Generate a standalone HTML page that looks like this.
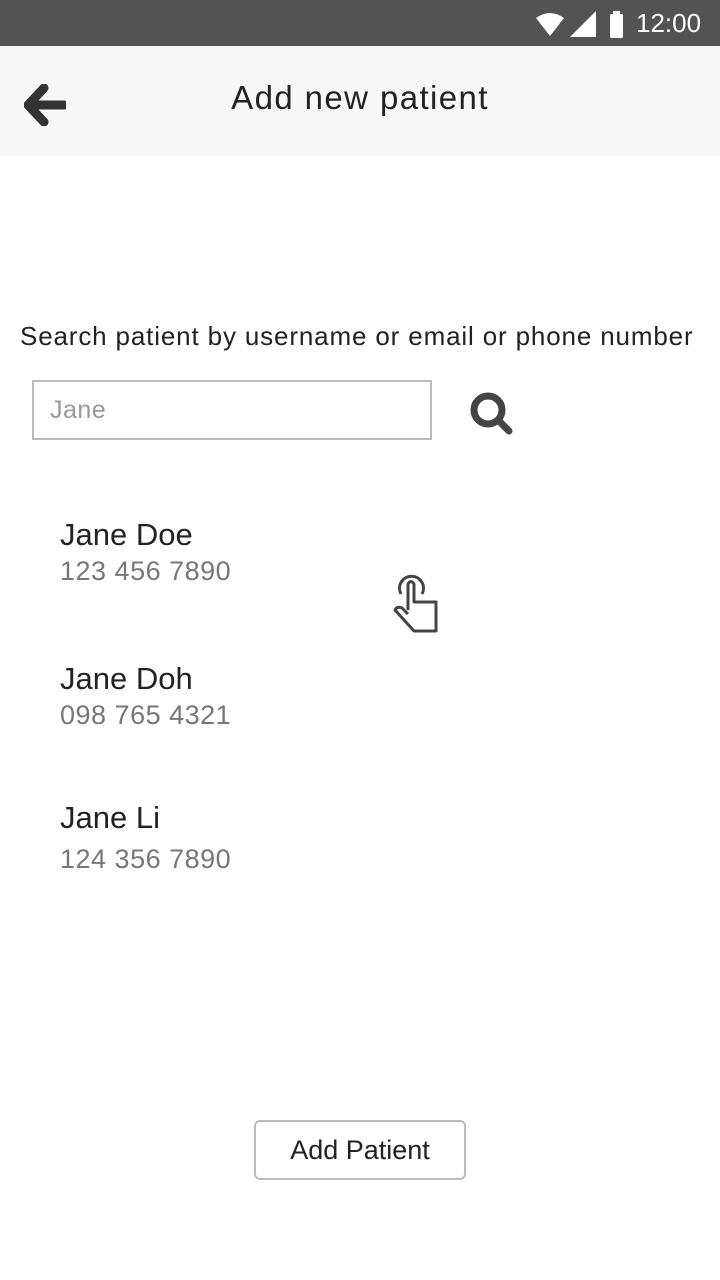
<!DOCTYPE html>
<html><head><meta charset="utf-8"><style>
*{margin:0;padding:0;box-sizing:border-box}
body{width:720px;height:1280px;background:#fff;font-family:"Liberation Sans",sans-serif;position:relative;overflow:hidden;color:#222}
.abs{position:absolute}
.num{font-size:27px;color:#777;letter-spacing:0.5px}
</style></head><body>
<div class="abs" style="left:0;top:0;width:720px;height:46px;background:#535353"></div>
<svg class="abs" style="left:534px;top:10px" width="90" height="28" viewBox="0 0 90 28">
<path d="M2 8 Q16 -2 30 8 L16 26 Z" fill="#fff"/>
<path d="M36 27 L62 27 L62 1 Z" fill="#fff"/>
<rect x="76" y="4" width="13" height="24" rx="1.5" fill="#fff"/><rect x="79" y="1" width="7" height="4" fill="#fff"/>
</svg>
<div class="abs" style="left:636px;top:8px;color:#fff;font-size:26px">12:00</div>
<div class="abs" style="left:0;top:46px;width:720px;height:110px;background:#f7f7f7"></div>
<svg class="abs" style="left:24px;top:84px" width="42" height="42" viewBox="0 0 42 42">
<path d="M20 4 L4 21 L20 38 M5 21 L40 21" stroke="#333" stroke-width="9" fill="none" stroke-linejoin="round" stroke-linecap="round"/>
</svg>
<div class="abs" style="left:0;width:720px;top:79px;text-align:center;font-size:33px;color:#222;letter-spacing:1.4px">Add new patient</div>
<div class="abs" style="left:20px;top:321px;font-size:26px;color:#222;letter-spacing:0.85px">Search patient by username or email or phone number</div>
<div class="abs" style="left:32px;top:380px;width:400px;height:60px;border:2px solid #bbb;background:#fff"></div>
<div class="abs" style="left:50px;top:396px;font-size:25px;color:#999;letter-spacing:0.5px">Jane</div>
<svg class="abs" style="left:466px;top:390px" width="50" height="46" viewBox="0 0 50 46">
<circle cx="22" cy="20" r="14" stroke="#444" stroke-width="7" fill="none"/>
<path d="M33 31 L43 41" stroke="#444" stroke-width="7" stroke-linecap="round"/>
</svg>
<div class="abs" style="left:60px;top:517px;font-size:31px;color:#222">Jane Doe</div>
<div class="abs num" style="left:60px;top:556px">123 456 7890</div>
<div class="abs" style="left:60px;top:661px;font-size:31px;color:#222">Jane Doh</div>
<div class="abs num" style="left:60px;top:700px">098 765 4321</div>
<div class="abs" style="left:60px;top:800px;font-size:31px;color:#222">Jane Li</div>
<div class="abs num" style="left:60px;top:844px">124 356 7890</div>
<svg class="abs" style="left:390px;top:568px" width="52" height="66" viewBox="0 0 52 66">
<path d="M11 26 A12 12 0 1 1 32 26" stroke="#444" stroke-width="3" fill="none"/>
<path d="M18 42 L18 16 Q21 11 24 16 L24 34 L46 34 L46 63 L24 63 L5 42 Q7 38 12 40 L18 46" stroke="#444" stroke-width="3" fill="#fff" stroke-linejoin="round"/>
</svg>
<div class="abs" style="left:254px;top:1120px;width:212px;height:60px;border:2px solid #bbb;border-radius:6px;text-align:center;line-height:56px;font-size:27px;color:#222">Add Patient</div>
</body></html>
